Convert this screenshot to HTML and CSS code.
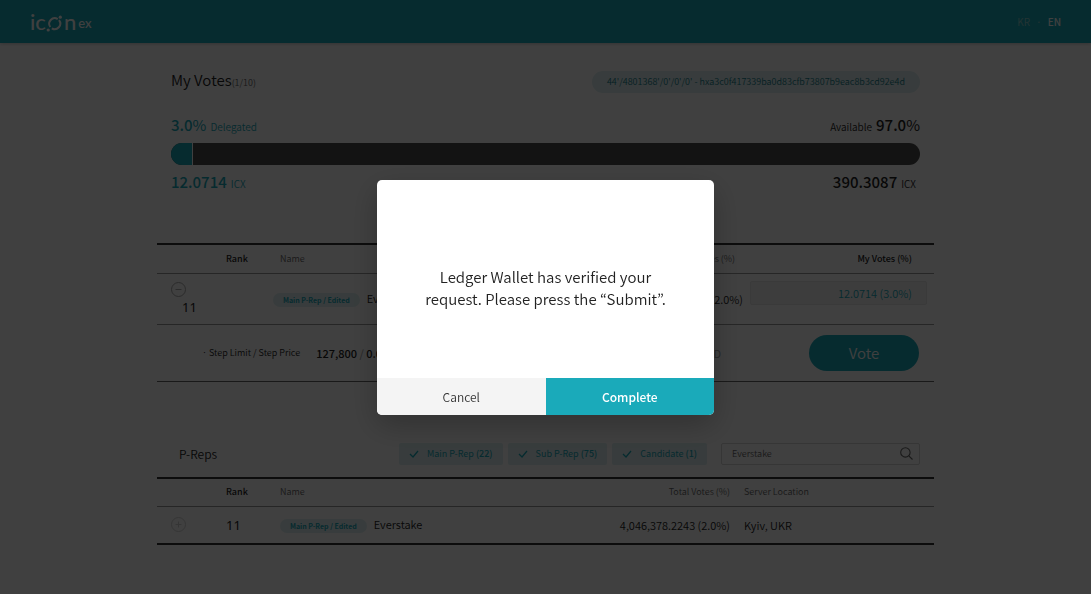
FILE: index.html
```html
<!DOCTYPE html>
<html lang="en">
    <head>
        <title>ICONex - My Votes</title>
        <meta charset="UTF-8">
        <meta name="viewport" content="width=device-width, initial-scale=1.0">
        <link rel="stylesheet" href="styles.css">
    </head>
    <body>
        <header class="header">
            <a class="logo" href="#" aria-label="ICONex home">
                <span>ic</span>
                <svg width="17" height="17" viewBox="0 0 17 17" fill="none" stroke="currentColor" stroke-width="2">
                    <path d="M11.7 4.1A5.5 5.5 0 0 0 4.3 12"/>
                    <path d="M5.8 13.3A5.5 5.5 0 0 0 13 5.2"/>
                    <circle cx="14.3" cy="2.2" r="1.6" fill="currentColor" stroke="none"/>
                    <circle cx="2.2" cy="15" r="1.6" fill="currentColor" stroke="none"/>
                </svg>
                <span>n</span>
                <span class="logo-ex">ex</span>
            </a>
            <nav class="lang">
                <a href="#">KR</a>
                <span>·</span>
                <a class="on" href="#">EN</a>
            </nav>
        </header>

        <main class="container">
            <section class="votes">
                <div class="line">
                    <h1>My Votes<small>(1/10)</small></h1>
                    <span class="address">44'/4801368'/0'/0'/0' - hxa3c0f417339ba0d83cfb73807b9eac8b3cd92e4d</span>
                </div>
                <div class="line percent">
                    <p class="teal"><strong>3.0<i>%</i></strong><span>Delegated</span></p>
                    <p><span>Available</span><strong>97.0<i>%</i></strong></p>
                </div>
                <div class="bar">
                    <div class="bar-fill" style="width: 3%"></div>
                </div>
                <div class="line amount">
                    <p class="teal"><strong>12.0714</strong><span>ICX</span></p>
                    <p class="right"><strong>390.3087</strong><span>ICX</span></p>
                </div>
            </section>

            <table class="my-table">
                <colgroup>
                    <col class="col-toggle">
                    <col class="col-rank">
                    <col>
                    <col class="col-total">
                    <col class="col-my">
                </colgroup>
                <thead>
                    <tr>
                        <th></th>
                        <th class="strong">Rank</th>
                        <th>Name</th>
                        <th class="num">Total Votes (%)</th>
                        <th class="num strong">My Votes (%)</th>
                    </tr>
                </thead>
                <tbody>
                    <tr class="vote-row">
                        <td colspan="2" class="rank-cell">
                            <button class="toggle" aria-label="Remove">
                                <svg width="15" height="15" viewBox="0 0 15 15" fill="none" stroke="currentColor"><circle cx="7.5" cy="7.5" r="7"/><path d="M4.5 7.5h6"/></svg>
                            </button>
                            <span class="rank">11</span>
                        </td>
                        <td class="name-cell"><span class="badge">Main P-Rep / Edited</span>Everstake</td>
                        <td class="num">4,046,378.2243 (2.0%)</td>
                        <td class="input-cell"><input type="text" value="12.0714 (3.0%)" aria-label="My votes"></td>
                    </tr>
                    <tr class="fee-row">
                        <td colspan="5">
                            <div class="fee">
                                <span class="fee-label">· Step Limit / Step Price</span>
                                <span class="fee-value">127,800 <i>/</i> 0.00000001 ICX</span>
                                <span class="fee-usd">0.0002 USD</span>
                                <button class="vote-btn">Vote</button>
                            </div>
                        </td>
                    </tr>
                </tbody>
            </table>

            <div class="preps-bar">
                <h2>P-Reps</h2>
                <div class="filters">
                    <button class="chip"><svg width="10" height="8" viewBox="0 0 10 8" fill="none" stroke="currentColor" stroke-width="1.3"><path d="M1 4l3 3 5-6"/></svg>Main P-Rep <b>(22)</b></button>
                    <button class="chip"><svg width="10" height="8" viewBox="0 0 10 8" fill="none" stroke="currentColor" stroke-width="1.3"><path d="M1 4l3 3 5-6"/></svg>Sub P-Rep <b>(75)</b></button>
                    <button class="chip"><svg width="10" height="8" viewBox="0 0 10 8" fill="none" stroke="currentColor" stroke-width="1.3"><path d="M1 4l3 3 5-6"/></svg>Candidate <b>(1)</b></button>
                </div>
                <div class="search">
                    <input type="text" value="Everstake" aria-label="Search P-Rep">
                    <svg width="13" height="13" viewBox="0 0 13 13" fill="none" stroke="currentColor" stroke-width="1.1"><circle cx="5.4" cy="5.4" r="4.7"/><path d="M8.8 8.8l3.7 3.7"/></svg>
                </div>
            </div>

            <table class="preps-table">
                <colgroup>
                    <col class="col-toggle">
                    <col class="col-rank">
                    <col>
                    <col class="col-total">
                    <col class="col-server">
                </colgroup>
                <thead>
                    <tr>
                        <th></th>
                        <th class="strong">Rank</th>
                        <th>Name</th>
                        <th class="num">Total Votes (%)</th>
                        <th class="server">Server Location</th>
                    </tr>
                </thead>
                <tbody>
                    <tr>
                        <td class="toggle-cell">
                            <button class="toggle faint" aria-label="Add">
                                <svg width="15" height="15" viewBox="0 0 15 15" fill="none" stroke="currentColor"><circle cx="7.5" cy="7.5" r="7"/><path d="M4.5 7.5h6M7.5 4.5v6"/></svg>
                            </button>
                        </td>
                        <td><span class="rank">11</span></td>
                        <td><span class="badge">Main P-Rep / Edited</span>Everstake</td>
                        <td class="num">4,046,378.2243 (2.0%)</td>
                        <td class="server">Kyiv, UKR</td>
                    </tr>
                </tbody>
            </table>
        </main>

        <div class="overlay">
            <div class="modal" role="dialog" aria-modal="true">
                <p class="modal-text">Ledger Wallet has verified your<br>request. Please press the “Submit”.</p>
                <div class="modal-buttons">
                    <button class="cancel">Cancel</button>
                    <button class="complete">Complete</button>
                </div>
            </div>
        </div>
    </body>
</html>
```
FILE: styles.css
```css
:root {
    --teal: #1aaaba;
    --dark: #222;
    --gray: #666;
    --line: #999;
    --light-teal: #def0f2;
}

* {
    box-sizing: border-box;
    margin: 0;
    padding: 0;
}

body, button, input {
    font-family: "Noto Sans CJK KR", "Noto Sans", sans-serif;
    font-weight: 350;
}

body {
    background: #fff;
    color: var(--dark);
    font-size: 11px;
    line-height: 16px;
}

a {
    color: inherit;
    text-decoration: none;
}

button {
    border: none;
    cursor: pointer;
}

i {
    font-style: normal;
    font-weight: 400;
}

/* header */
.header {
    display: flex;
    justify-content: space-between;
    align-items: center;
    height: 43px;
    padding: 0 30px;
    background: var(--teal);
    color: #fff;
    box-shadow: 0 1px 3px rgba(0, 0, 0, 0.2);
}

.logo {
    display: flex;
    align-items: center;
    font-family: Lato, sans-serif;
    font-size: 22px;
    font-weight: 500;
    line-height: 18px;
}

.logo svg {
    margin: 3px 1px 0 0;
}

.logo-ex {
    align-self: flex-end;
    margin-left: 2px;
    font-size: 13px;
}

.lang {
    display: flex;
    gap: 6px;
    font-size: 10px;
    font-weight: 400;
    color: #8cc;
}

.lang .on {
    color: #fff;
    font-weight: 500;
}

/* my votes */
.container {
    width: 100%;
    max-width: 777px;
    margin: 0 auto;
}

.votes {
    padding: 26px 14px 0;
}

.line {
    display: flex;
    justify-content: space-between;
    align-items: center;
}

h1 {
    font-size: 15px;
    font-weight: 350;
    line-height: 22px;
}

h1 small {
    font-size: 9px;
    color: var(--gray);
}

.address {
    padding: 3px 15px;
    border-radius: 11px;
    background: var(--light-teal);
    color: #177f8b;
    font-size: 9px;
}

.teal {
    color: var(--teal);
}

.percent {
    margin-top: 20px;
}

.percent p,
.amount p {
    display: flex;
    align-items: baseline;
    gap: 4px;
    font-size: 10px;
    line-height: 22px;
}

.percent strong,
.amount strong {
    font-size: 15px;
    font-weight: 500;
}

.bar {
    height: 22px;
    margin: 5px 0 6px;
    border-radius: 11px;
    background: #4c4c4c;
    overflow: hidden;
}

.bar-fill {
    height: 100%;
    background: var(--teal);
    border-right: 1px solid #fff;
}

.amount .right {
    padding-right: 4px;
}

/* tables */
table {
    width: 100%;
    table-layout: fixed;
    border-collapse: collapse;
    border-top: 2px solid #333;
}

.my-table {
    margin-top: 48px;
}

.preps-table {
    border-bottom: 2px solid #333;
}

.col-toggle {
    width: 69px;
}

.col-rank {
    width: 54px;
}

.col-total {
    width: 220px;
}

.col-my {
    width: 191px;
}

.col-server {
    width: 204px;
}

th {
    height: 29px;
    border-bottom: 1px solid var(--line);
    color: var(--gray);
    font-size: 9px;
    font-weight: 350;
    text-align: left;
}

th.strong {
    color: var(--dark);
    font-weight: 500;
}

th.num,
td.num {
    text-align: right;
}

.my-table th.num {
    padding-right: 8px;
}

.my-table th:last-child {
    padding-right: 22px;
}

.server {
    padding-left: 14px;
}

td {
    height: 37px;
}

.vote-row td {
    height: 51px;
    border-bottom: 1px solid var(--line);
}

.rank {
    font-family: "Noto Sans", sans-serif;
    font-size: 13px;
    font-weight: 400;
}

.rank-cell .rank {
    display: block;
    padding: 2px 0 0 25px;
}

.toggle {
    display: block;
    width: 15px;
    height: 15px;
    margin-left: 14px;
    background: none;
    color: #aaa;
}

.toggle svg {
    display: block;
}

.toggle.faint {
    color: #d4d4d4;
}

.badge {
    display: inline-block;
    margin-right: 7px;
    padding: 0 10px;
    border-radius: 7px;
    background: var(--light-teal);
    color: var(--teal);
    font-size: 7px;
    font-weight: 700;
    line-height: 14px;
    vertical-align: middle;
}

.name-cell .badge {
    margin-left: -7px;
}

.input-cell {
    padding: 0 7px 12px;
}

.input-cell input {
    display: block;
    width: 100%;
    height: 24px;
    padding: 0 14px;
    border: 1px solid #e6e6e6;
    border-radius: 2px;
    background: #f4f4f4;
    color: var(--teal);
    font-size: 11px;
    text-align: right;
}

.fee-row td {
    border-bottom: 1px solid var(--gray);
}

.fee {
    display: flex;
    align-items: center;
    height: 56px;
    padding: 0 15px 0 45px;
}

.fee-label {
    margin-right: 16px;
    font-size: 9px;
}

.fee-value {
    font-weight: 500;
}

.fee-value i {
    color: var(--line);
}

.fee-usd {
    margin: 0 88px 0 auto;
    color: var(--line);
}

.vote-btn {
    width: 110px;
    height: 36px;
    border-radius: 18px;
    background: var(--teal);
    color: #fff;
    font-size: 15px;
}

/* p-reps */
.preps-bar {
    display: flex;
    align-items: center;
    padding: 61px 14px 12px 22px;
}

h2 {
    font-size: 12px;
    font-weight: 350;
    line-height: 22px;
}

.filters {
    display: flex;
    gap: 5px;
    margin: 0 14px 0 auto;
}

.chip {
    display: flex;
    align-items: center;
    gap: 2px;
    height: 22px;
    padding: 0 10px;
    border-radius: 2px;
    background: var(--light-teal);
    color: var(--teal);
    font-size: 9px;
    font-weight: 400;
}

.chip svg {
    margin-right: 6px;
}

.chip b {
    font-weight: 500;
}

.search {
    display: flex;
    align-items: center;
    width: 199px;
    height: 22px;
    padding: 0 6px 0 10px;
    border: 1px solid #d5d5d5;
    border-radius: 2px;
    color: var(--gray);
}

.search input {
    flex: 1;
    min-width: 0;
    border: none;
    outline: none;
    background: none;
    color: var(--gray);
    font-size: 9px;
}

/* modal */
.overlay {
    position: fixed;
    inset: 0;
    display: flex;
    justify-content: center;
    align-items: center;
    background: rgba(0, 0, 0, 0.75);
}

.modal {
    width: 337px;
    border-radius: 5px;
    background: #fff;
    box-shadow: 0 10px 30px rgba(0, 0, 0, 0.25);
    overflow: hidden;
}

.modal-text {
    padding: 86px 20px 68px;
    font-size: 15px;
    line-height: 22px;
    text-align: center;
}

.modal-buttons {
    display: flex;
}

.modal-buttons button {
    flex: 1;
    height: 37px;
    font-size: 12px;
}

.cancel {
    background: #f4f4f4;
    color: #333;
}

.modal-buttons .complete {
    background: var(--teal);
    color: #fff;
    font-weight: 500;
}
```
